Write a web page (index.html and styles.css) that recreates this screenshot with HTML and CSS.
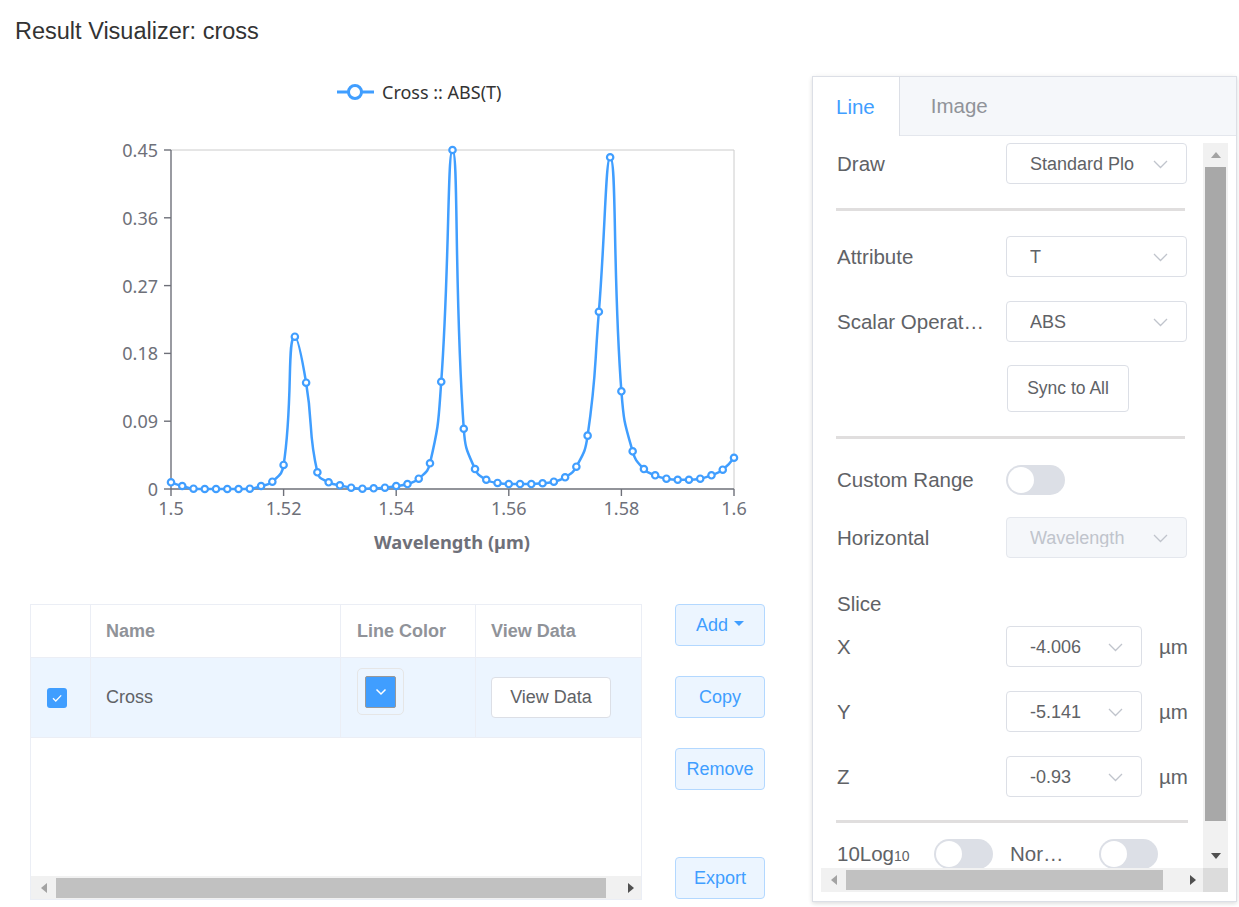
FILE: index.html
```html
<!DOCTYPE html>
<html lang="en">
<head>
<meta charset="utf-8">
<title>Result Visualizer: cross</title>
<link rel="stylesheet" href="styles.css">
</head>
<body>
<h1 class="title">Result Visualizer: cross</h1>
<div class="main">
  <div class="left">
    <svg class="chart" width="797" height="500" viewBox="15 76 797 500" xmlns="http://www.w3.org/2000/svg">
      <g class="legend">
        <line class="legend-line" x1="337" y1="92" x2="374" y2="92"/>
        <circle class="legend-dot" cx="355" cy="92" r="6.5"/>
        <text class="legend-text" x="382" y="92">Cross :: ABS(T)</text>
      </g>
      <g class="frame">
        <line x1="171" y1="150" x2="734" y2="150"/>
        <line x1="734" y1="150" x2="734" y2="489"/>
      </g>
      <g class="axis">
        <line x1="171" y1="150" x2="171" y2="489"/>
        <line x1="171" y1="489" x2="734" y2="489"/>
        <line x1="164" y1="150" x2="171" y2="150"/>
        <line x1="164" y1="217.8" x2="171" y2="217.8"/>
        <line x1="164" y1="285.6" x2="171" y2="285.6"/>
        <line x1="164" y1="353.4" x2="171" y2="353.4"/>
        <line x1="164" y1="421.2" x2="171" y2="421.2"/>
        <line x1="164" y1="489" x2="171" y2="489"/>
        <line x1="171" y1="489" x2="171" y2="496"/>
        <line x1="283.6" y1="489" x2="283.6" y2="496"/>
        <line x1="396.2" y1="489" x2="396.2" y2="496"/>
        <line x1="508.8" y1="489" x2="508.8" y2="496"/>
        <line x1="621.4" y1="489" x2="621.4" y2="496"/>
        <line x1="734" y1="489" x2="734" y2="496"/>
      </g>
      <g class="ylabels">
        <text x="158" y="150">0.45</text>
        <text x="158" y="217.8">0.36</text>
        <text x="158" y="285.6">0.27</text>
        <text x="158" y="353.4">0.18</text>
        <text x="158" y="421.2">0.09</text>
        <text x="158" y="489">0</text>
      </g>
      <g class="xlabels">
        <text x="171" y="508">1.5</text>
        <text x="283.6" y="508">1.52</text>
        <text x="396.2" y="508">1.54</text>
        <text x="508.8" y="508">1.56</text>
        <text x="621.4" y="508">1.58</text>
        <text x="734" y="508">1.6</text>
      </g>
      <text class="axis-name" x="452" y="542" textLength="156" lengthAdjust="spacingAndGlyphs">Wavelength (µm)</text>
      <g id="series"></g>
    </svg>

    <div class="data-row">
      <div class="tbl">
        <div class="tr th">
          <div class="cell c1"></div>
          <div class="cell c2">Name</div>
          <div class="cell c3">Line Color</div>
          <div class="cell c4">View Data</div>
        </div>
        <div class="tr td">
          <div class="cell c1">
            <span class="checkbox">
              <svg width="20" height="20" viewBox="0 0 20 20"><path d="M6 10.2 L8.8 13 L14.2 7.4" fill="none" stroke="#fff" stroke-width="1.3"/></svg>
            </span>
          </div>
          <div class="cell c2">Cross</div>
          <div class="cell c3 top">
            <span class="picker">
              <span class="swatch">
                <svg width="12" height="8" viewBox="0 0 12 8"><path d="M1.5 1.5 L6 6 L10.5 1.5" fill="none" stroke="#fff" stroke-width="1.5"/></svg>
              </span>
            </span>
          </div>
          <div class="cell c4"><button class="btn">View Data</button></div>
        </div>
        <div class="tbl-fill"></div>
        <div class="hscroll">
          <span class="sb-arrow"><span class="tri-l"></span></span>
          <span class="hthumb tbl-thumb"></span>
          <span class="sb-track"></span>
          <span class="sb-arrow"><span class="tri-r"></span></span>
        </div>
      </div>
      <div class="actions">
        <button class="btn-light">Add <span class="caret"></span></button>
        <button class="btn-light gap">Copy</button>
        <button class="btn-light gap">Remove</button>
        <button class="btn-light export">Export</button>
      </div>
    </div>
  </div>

  <div class="panel">
    <div class="tabs">
      <div class="tab active">Line</div>
      <div class="tab">Image</div>
    </div>
    <div class="panel-body">
      <div class="vp">
        <div class="row">
          <span class="lbl">Draw</span>
          <span class="sel"><span class="val">Standard Plot</span><svg class="chev" width="15" height="9" viewBox="0 0 15 9"><path d="M1 1 L7.5 7.5 L14 1"/></svg></span>
        </div>
        <div class="divider"></div>
        <div class="row r-attr">
          <span class="lbl">Attribute</span>
          <span class="sel"><span class="val">T</span><svg class="chev" width="15" height="9" viewBox="0 0 15 9"><path d="M1 1 L7.5 7.5 L14 1"/></svg></span>
        </div>
        <div class="row r-std">
          <span class="lbl">Scalar Operation</span>
          <span class="sel"><span class="val">ABS</span><svg class="chev" width="15" height="9" viewBox="0 0 15 9"><path d="M1 1 L7.5 7.5 L14 1"/></svg></span>
        </div>
        <div class="row r-sync">
          <span class="lbl"></span>
          <button class="btn sync">Sync to All</button>
        </div>
        <div class="divider"></div>
        <div class="row r-range">
          <span class="lbl">Custom Range</span>
          <span class="switch"><span class="knob"></span></span>
        </div>
        <div class="row r-horiz">
          <span class="lbl">Horizontal</span>
          <span class="sel dis"><span class="val">Wavelength</span><svg class="chev" width="15" height="9" viewBox="0 0 15 9"><path d="M1 1 L7.5 7.5 L14 1"/></svg></span>
        </div>
        <div class="row r-slice">
          <span class="lbl">Slice</span>
        </div>
        <div class="row r-x">
          <span class="lbl">X</span>
          <span class="sel sm"><span class="val">-4.006</span><svg class="chev" width="15" height="9" viewBox="0 0 15 9"><path d="M1 1 L7.5 7.5 L14 1"/></svg></span>
          <span class="unit">µm</span>
        </div>
        <div class="row r-std">
          <span class="lbl">Y</span>
          <span class="sel sm"><span class="val">-5.141</span><svg class="chev" width="15" height="9" viewBox="0 0 15 9"><path d="M1 1 L7.5 7.5 L14 1"/></svg></span>
          <span class="unit">µm</span>
        </div>
        <div class="row r-std">
          <span class="lbl">Z</span>
          <span class="sel sm"><span class="val">-0.93</span><svg class="chev" width="15" height="9" viewBox="0 0 15 9"><path d="M1 1 L7.5 7.5 L14 1"/></svg></span>
          <span class="unit">µm</span>
        </div>
        <div class="divider d3"></div>
        <div class="row r-last">
          <span class="lbl lbl-log">10Log<sub class="sub">10</sub></span>
          <span class="switch"><span class="knob"></span></span>
          <span class="lbl lbl-norm">Normalize</span>
          <span class="switch"><span class="knob"></span></span>
        </div>
      </div>
      <div class="vscroll">
        <span class="vs-arrow"><span class="tri-u"></span></span>
        <span class="vthumb"></span>
        <span class="sb-track"></span>
        <span class="vs-arrow"><span class="tri-d"></span></span>
      </div>
      <div class="hscroll panel-h">
        <span class="sb-arrow"><span class="tri-l"></span></span>
        <span class="hthumb panel-thumb"></span>
        <span class="sb-track"></span>
        <span class="sb-arrow"><span class="tri-r"></span></span>
      </div>
      <div class="corner"></div>
    </div>
  </div>
</div>
<script src="script.js"></script>
</body>
</html>
```

FILE: styles.css
```css
* { box-sizing: border-box; }
html, body { margin: 0; background: #fff; }
body {
  font-family: "Liberation Sans", Arial, sans-serif;
  color: #606266;
  width: 1239px;
  height: 907px;
  overflow: hidden;
}
button { font-family: inherit; cursor: pointer; }

.title {
  margin: 0;
  padding: 16px 15px 0;
  font-size: 23.5px;
  font-weight: normal;
  line-height: 30px;
  color: #333;
}

.main {
  display: flex;
  align-items: flex-start;
  margin-top: 30px;
  padding-left: 15px;
}
.left { width: 797px; }

/* chart */
.chart { display: block; font-family: "Noto Sans", "Open Sans", sans-serif; }
.legend-line { stroke: #409eff; stroke-width: 3; }
.legend-dot { fill: #fff; stroke: #409eff; stroke-width: 3; }
.legend-text { font-size: 18px; fill: #333; dominant-baseline: central; }
.frame line { stroke: #ccc; stroke-width: 1; }
.axis line { stroke: #6e7079; stroke-width: 1.4; }
.ylabels text { font-size: 18px; fill: #6e7079; text-anchor: end; dominant-baseline: central; }
.xlabels text { font-size: 18px; fill: #6e7079; text-anchor: middle; dominant-baseline: central; }
.axis-name { font-size: 17px; font-weight: bold; fill: #6e7079; text-anchor: middle; dominant-baseline: central; }
.series-line { fill: none; stroke: #409eff; stroke-width: 2.5; stroke-linejoin: round; }
.series-dot { fill: #fff; stroke: #409eff; stroke-width: 2.2; }

/* table + actions */
.data-row {
  display: flex;
  align-items: flex-start;
  margin-top: 28px;
  padding-left: 15px;
}
.tbl {
  width: 612px;
  height: 296px;
  border: 1px solid #ebeef5;
  display: flex;
  flex-direction: column;
  font-size: 18px;
}
.tr { display: flex; }
.th {
  height: 53px;
  border-bottom: 1px solid #ebeef5;
  color: #909399;
  font-weight: bold;
}
.td {
  height: 80px;
  border-bottom: 1px solid #ebeef5;
  background: #ecf5ff;
  color: #606266;
}
.cell {
  display: flex;
  align-items: center;
  padding-left: 16px;
  border-right: 1px solid #ebeef5;
}
.c1 { width: 60px; }
.c2 { width: 250px; padding-left: 15px; }
.c3 { width: 135px; }
.c3.top { align-items: flex-start; padding-top: 10px; }
.c4 { flex: 1; border-right: 0; padding-left: 15px; }

.checkbox {
  width: 20px;
  height: 20px;
  border-radius: 3px;
  background: #409eff;
  display: flex;
}
.picker {
  width: 47px;
  height: 47px;
  border: 1px solid #e6e6e6;
  border-radius: 5px;
  padding: 7px;
  display: flex;
}
.swatch {
  width: 32px;
  height: 32px;
  border: 1px solid #999;
  border-radius: 2px;
  background: #409eff;
  display: flex;
  align-items: center;
  justify-content: center;
}
.btn {
  width: 120px;
  height: 41px;
  border: 1px solid #dcdfe6;
  border-radius: 4px;
  background: #fff;
  color: #606266;
  font-size: 18px;
  padding: 0;
}
.tbl-fill { flex: 1; }

.hscroll {
  height: 23px;
  background: #f1f1f1;
  display: flex;
  align-items: center;
  flex: none;
}
.sb-arrow {
  width: 25px;
  height: 100%;
  display: flex;
  align-items: center;
  justify-content: center;
  flex: none;
}
.sb-track { flex: 1; }
.hthumb { height: 20px; background: #c1c1c1; flex: none; }
.tbl-thumb { width: 550px; }
.tri-l {
  width: 0; height: 0;
  border-style: solid;
  border-width: 5px 6px 5px 0;
  border-color: transparent #a3a3a3 transparent transparent;
}
.tri-r {
  width: 0; height: 0;
  border-style: solid;
  border-width: 5px 0 5px 6px;
  border-color: transparent transparent transparent #505050;
  margin-left: 4px;
}
.tri-u {
  width: 0; height: 0;
  border-style: solid;
  border-width: 0 5.5px 6px;
  border-color: transparent transparent #a3a3a3;
}
.tri-d {
  width: 0; height: 0;
  border-style: solid;
  border-width: 6px 5.5px 0;
  border-color: #505050 transparent transparent;
}

.actions {
  margin-left: 33px;
  width: 90px;
  display: flex;
  flex-direction: column;
}
.btn-light {
  height: 42px;
  width: 90px;
  border: 1px solid #b3d8ff;
  border-radius: 4px;
  background: #ecf5ff;
  color: #409eff;
  font-size: 18px;
  padding: 0;
  display: flex;
  align-items: center;
  justify-content: center;
}
.btn-light.gap { margin-top: 30px; }
.btn-light.export { margin-top: 67px; }
.caret {
  width: 0; height: 0;
  margin-left: 6px;
  margin-top: -3px;
  border-style: solid;
  border-width: 5.5px 5.5px 0;
  border-color: #409eff transparent transparent;
}

/* panel */
.panel {
  width: 425px;
  height: 826px;
  border: 1px solid #dcdfe6;
  background: #fff;
  box-shadow: 0 2px 4px rgba(0,0,0,.10), 0 0 6px rgba(0,0,0,.04);
  display: flex;
  flex-direction: column;
}
.tabs {
  height: 59px;
  flex: none;
  background: #f5f7fa;
  border-bottom: 1px solid #e4e7ed;
  display: flex;
}
.tab {
  display: flex;
  align-items: center;
  font-size: 20.5px;
  color: #909399;
  padding-left: 31px;
}
.tab.active {
  background: #fff;
  color: #409eff;
  padding: 0 24px 0 23px;
  border-right: 1px solid #dcdfe6;
  margin-bottom: -1px;
}
.panel-body {
  flex: 1;
  padding: 7px 8px 9px;
  display: grid;
  grid-template-columns: 1fr 25px;
  grid-template-rows: 1fr 24px;
  min-height: 0;
}
.vp {
  overflow: hidden;
  padding-left: 16px;
  min-height: 0;
}
.row {
  display: flex;
  align-items: center;
  height: 41px;
  white-space: nowrap;
}
.r-attr { margin-top: 25px; }
.r-std { margin-top: 24px; }
.r-sync { height: 47px; margin-top: 23px; }
.r-range { margin-top: 20px; }
.r-horiz { margin-top: 17px; }
.r-slice { height: 24px; margin-top: 34px; }
.r-x { margin-top: 10px; }
.r-last { height: 30px; margin-top: 16px; }

.lbl {
  width: 169px;
  flex: none;
  font-size: 20.5px;
  color: #606266;
  white-space: nowrap;
  overflow: hidden;
  text-overflow: ellipsis;
  padding-right: 20px;
}
.lbl-log { width: 97px; padding-right: 0; overflow: visible; }
.sub { font-size: 14px; vertical-align: baseline; }
.lbl-norm { width: 60px; padding-right: 0; margin-left: 17px; margin-right: 29px; }

.divider {
  height: 3px;
  width: 349px;
  background: #e0dede;
  margin-top: 24px;
  margin-left: -1px;
}
.divider.d3 { width: 352px; margin-top: 23px; }

.sel {
  width: 181px;
  height: 41px;
  flex: none;
  border: 1px solid #dcdfe6;
  border-radius: 4px;
  display: flex;
  align-items: center;
  padding-left: 23px;
  font-size: 18px;
  color: #606266;
  line-height: 1;
  padding-top: 1px;
}
.sel .val { width: 103.5px; overflow: hidden; white-space: nowrap; }
.chev { margin-left: auto; margin-right: 18px; flex: none; }
.chev path { fill: none; stroke: #c0c4cc; stroke-width: 1.3; }
.sel.sm { width: 136px; }
.sel.sm .val { width: 70px; }
.sel.dis { background: #f5f7fa; border-color: #e4e7ed; color: #c0c4cc; }
.unit { margin-left: 17px; font-size: 20.5px; color: #606266; }

.sync { width: 122px; height: 47px; margin-left: 1px; font-size: 17.5px; }

.switch {
  width: 59px;
  height: 30px;
  flex: none;
  border-radius: 15px;
  background: #dcdfe6;
  display: flex;
  align-items: center;
  padding-left: 2px;
}
.knob {
  width: 26px;
  height: 26px;
  border-radius: 50%;
  background: #fff;
}

.vscroll {
  background: #f1f1f1;
  display: flex;
  flex-direction: column;
  min-height: 0;
}
.vs-arrow {
  height: 24px;
  flex: none;
  display: flex;
  align-items: center;
  justify-content: center;
}
.vthumb { height: 654px; flex: none; margin: 0 2px; background: #a8a8a8; }
.panel-h { height: 24px; }
.panel-thumb { width: 317px; }
.corner { background: #dcdcdc; }
```

FILE: script.js
```js
(function () {
  var data = [0.0089, 0.0040, 0.0004, 0, 0, 0, 0, 0.0004, 0.0040, 0.0097,
    0.0319, 0.2022, 0.1411, 0.0222, 0.0089, 0.0049, 0.0017, 0.0004, 0.0009, 0.0017,
    0.0040, 0.0066, 0.0137, 0.0341, 0.1424, 0.45, 0.0800, 0.0265, 0.0123, 0.0080,
    0.0066, 0.0066, 0.0066, 0.0076, 0.0097, 0.0155, 0.0296, 0.0708, 0.2353, 0.4403,
    0.1297, 0.0500, 0.0265, 0.0182, 0.0137, 0.0123, 0.0123, 0.0137, 0.0182, 0.0256,
    0.0415];
  var x0 = 171, x1 = 734, y0 = 489, y1 = 150, yMax = 0.45;
  var n = data.length;
  var pts = data.map(function (v, i) {
    return { x: x0 + (x1 - x0) * i / (n - 1), y: y0 - (y0 - y1) * v / yMax };
  });
  function clamp(v, a, b) {
    var lo = Math.min(a, b), hi = Math.max(a, b);
    return Math.max(lo, Math.min(hi, v));
  }
  function f(v) { return v.toFixed(2); }
  var smooth = 0.5;
  var d = 'M' + f(pts[0].x) + ',' + f(pts[0].y);
  var cox = pts[0].x, coy = pts[0].y;
  for (var i = 1; i < n; i++) {
    var p = pts[i], prev = pts[i - 1], next = pts[i + 1];
    var cix, ciy, nox, noy;
    if (!next) {
      cix = p.x; ciy = p.y; nox = p.x; noy = p.y;
    } else {
      var vx = next.x - prev.x, vy = next.y - prev.y;
      var l0 = Math.hypot(p.x - prev.x, p.y - prev.y);
      var l1 = Math.hypot(next.x - p.x, next.y - p.y);
      var r = l1 / (l0 + l1);
      nox = clamp(p.x + vx * smooth * r, p.x, next.x);
      noy = clamp(p.y + vy * smooth * r, p.y, next.y);
      vx = nox - p.x; vy = noy - p.y;
      cix = clamp(p.x - vx * l0 / l1, prev.x, p.x);
      ciy = clamp(p.y - vy * l0 / l1, prev.y, p.y);
      vx = p.x - cix; vy = p.y - ciy;
      nox = p.x + vx * l1 / l0; noy = p.y + vy * l1 / l0;
    }
    d += ' C' + [cox, coy, cix, ciy, p.x, p.y].map(f).join(' ');
    cox = nox; coy = noy;
  }
  var NS = 'http://www.w3.org/2000/svg';
  var g = document.getElementById('series');
  var path = document.createElementNS(NS, 'path');
  path.setAttribute('d', d);
  path.setAttribute('class', 'series-line');
  g.appendChild(path);
  pts.forEach(function (p) {
    var c = document.createElementNS(NS, 'circle');
    c.setAttribute('cx', f(p.x));
    c.setAttribute('cy', f(p.y));
    c.setAttribute('r', '3.2');
    c.setAttribute('class', 'series-dot');
    g.appendChild(c);
  });
})();
```
